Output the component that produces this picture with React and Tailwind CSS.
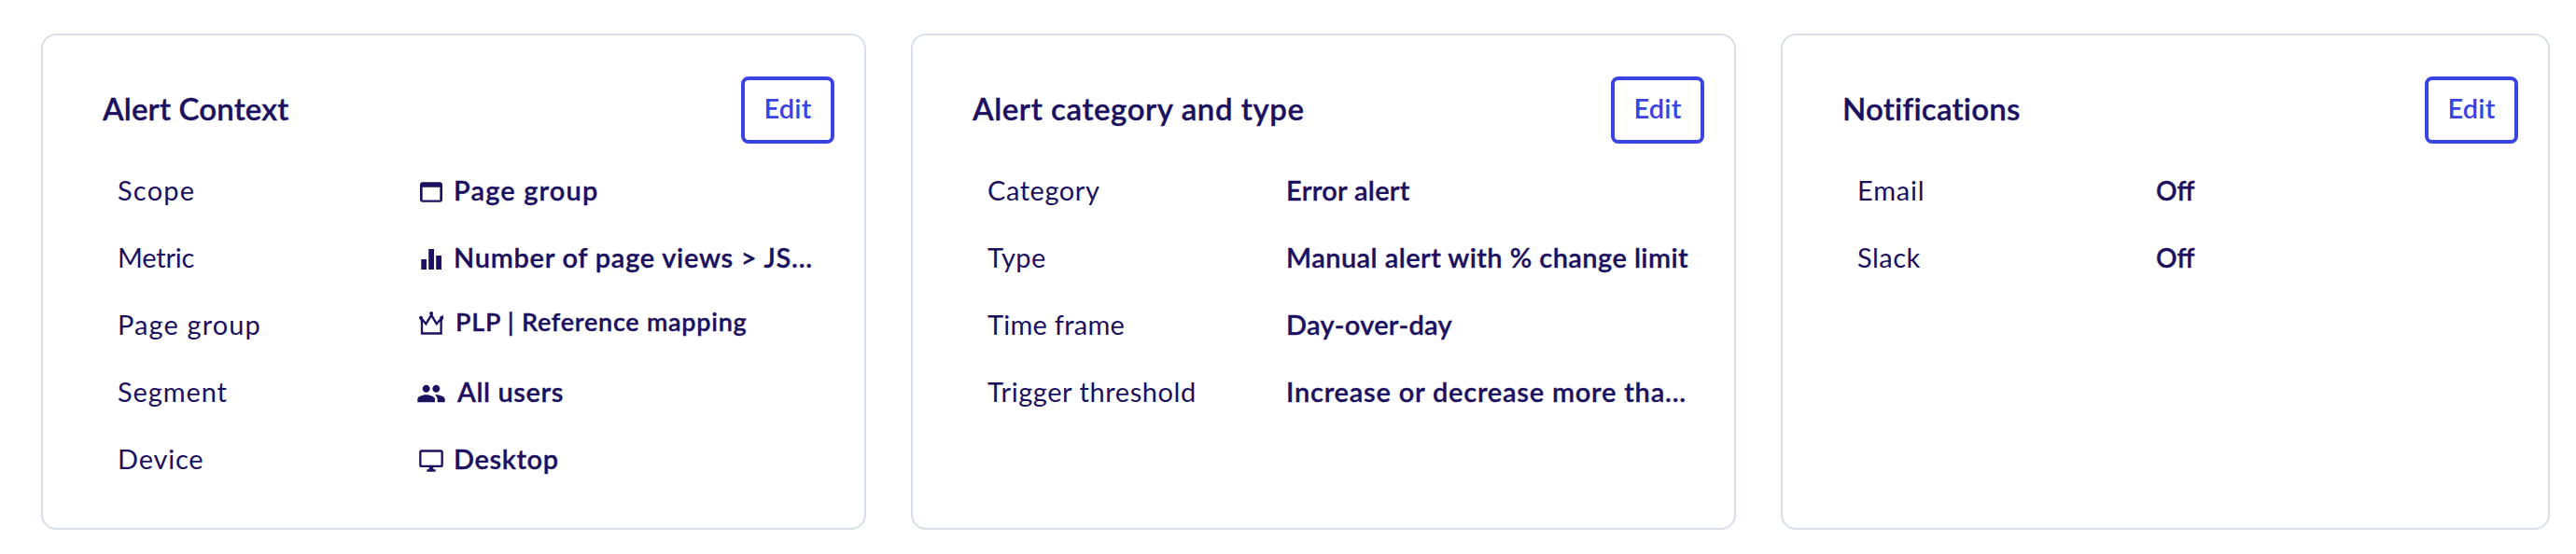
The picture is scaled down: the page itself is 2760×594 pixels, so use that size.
import React from 'react';
import { MdOutlineDesktopWindows, MdPeople } from 'react-icons/md';

const WindowIcon = () => (
  <svg viewBox="0 0 24 24" fill="currentColor" className="w-8 h-8">
    <path d="M19 4H5c-1.11 0-2 .9-2 2v12c0 1.1.89 2 2 2h14c1.1 0 2-.9 2-2V6c0-1.1-.89-2-2-2zm0 14.3H5V8h14v10.3z" />
  </svg>
);

const BarsIcon = () => (
  <svg viewBox="0 0 32 32" fill="currentColor" className="w-8 h-8">
    <path d="M5.3 16H11v11H5.3zM13.2 5H19v22h-5.8zM21.2 12H27v15h-5.8z" />
  </svg>
);

const CrownIcon = () => (
  <svg viewBox="0 0 32 32" fill="none" className="w-8 h-8">
    <path
      d="M5.2 7L6 11V23.5H26.6V11L27.2 7L21.8 13.2L16.2 3.8L10.4 13.2L5.2 7"
      stroke="currentColor"
      strokeWidth="2.3"
    />
    <g fill="currentColor">
      <circle cx="5" cy="6.8" r="2" />
      <circle cx="16.1" cy="2.1" r="2" />
      <circle cx="27.2" cy="6.8" r="2" />
    </g>
  </svg>
);

const cards = [
  {
    title: 'Alert Context',
    titleClass: 'tracking-[0.15px]',
    width: 'w-[884px]',
    rows: [
      {
        label: 'Scope',
        labelClass: 'tracking-[1.2px]',
        icon: <WindowIcon />,
        value: 'Page group',
        valueClass: 'ml-2 text-[29px] tracking-[1.15px]',
      },
      {
        label: 'Metric',
        labelClass: 'tracking-[-0.2px]',
        icon: <BarsIcon />,
        value: 'Number of page views > JS...',
        valueClass: 'ml-2 text-[29px] tracking-[0.72px]',
      },
      {
        label: 'Page group',
        labelClass: 'tracking-[1.1px]',
        icon: <CrownIcon />,
        value: 'PLP | Reference mapping',
        valueClass: 'ml-2.5 -mt-1.5 text-[27px] tracking-[0.73px]',
      },
      {
        label: 'Segment',
        labelClass: 'tracking-[0.9px]',
        icon: <MdPeople className="w-8 h-8" />,
        value: 'All users',
        valueClass: 'ml-3 text-[29px] tracking-[0.58px]',
      },
      {
        label: 'Device',
        labelClass: 'tracking-[0.78px]',
        icon: <MdOutlineDesktopWindows className="w-7 h-7" />,
        value: 'Desktop',
        valueClass: 'ml-2 text-[29px] tracking-[0.6px]',
      },
    ],
  },
  {
    title: 'Alert category and type',
    titleClass: 'tracking-[0.58px]',
    width: 'w-[884px]',
    rows: [
      {
        label: 'Category',
        labelClass: 'tracking-[0.55px]',
        value: 'Error alert',
        valueClass: 'text-[29px] tracking-[0.3px]',
      },
      {
        label: 'Type',
        labelClass: 'tracking-[0.4px]',
        value: 'Manual alert with % change limit',
        valueClass: 'text-[29px] tracking-[0.43px]',
      },
      {
        label: 'Time frame',
        labelClass: 'tracking-[0.25px]',
        value: 'Day-over-day',
        valueClass: 'text-[29px] tracking-[0.26px]',
      },
      {
        label: 'Trigger threshold',
        labelClass: 'tracking-[0.57px]',
        value: 'Increase or decrease more tha...',
        valueClass: 'text-[29px] tracking-[0.77px]',
      },
    ],
  },
  {
    title: 'Notifications',
    titleClass: 'tracking-[0.23px]',
    width: 'w-[824px]',
    rows: [
      { label: 'Email', labelClass: 'tracking-[0.8px]', value: 'Off', valueClass: 'text-[28px]' },
      { label: 'Slack', labelClass: 'tracking-[0.5px]', value: 'Off', valueClass: 'text-[28px]' },
    ],
  },
];

const Row = ({ label, labelClass, icon, value, valueClass }) => (
  <div className="flex items-center h-[72px] pl-4 text-[29px] leading-9 whitespace-nowrap">
    <span className={`w-80 shrink-0 pt-0.5 ${labelClass}`}>{label}</span>
    {icon && <span className="flex justify-center w-8 shrink-0 mt-1.5">{icon}</span>}
    <span className={`pt-0.5 leading-9 font-semibold [-webkit-text-stroke:0.35px_currentColor] ${valueClass}`}>
      {value}
    </span>
  </div>
);

const Card = ({ title, titleClass, width, rows }) => (
  <div className={`${width} h-[532px] shrink-0 border-2 border-[#d9dfe9] rounded-2xl bg-white pt-11 pl-16 pr-8`}>
    <div className="flex items-start justify-between mb-[13px]">
      <h2
        className={`mt-3.5 text-[33px] leading-10 font-semibold [-webkit-text-stroke:0.35px_currentColor] ${titleClass}`}
      >
        {title}
      </h2>
      <button
        type="button"
        className="w-[100px] h-[72px] pb-1 border-4 border-[#3a43e2] rounded-lg text-[#3a43e2] text-[29px] leading-9 font-semibold tracking-[0.2px] cursor-pointer"
      >
        Edit
      </button>
    </div>
    {rows.map((row) => (
      <Row key={row.label} {...row} />
    ))}
  </div>
);

const App = () => {
  return (
    <div className="flex gap-12 h-[594px] px-11 pt-9 bg-white text-[#1b1160] font-['Lato',sans-serif]">
      {cards.map((card) => (
        <Card key={card.title} {...card} />
      ))}
    </div>
  );
};

export default App;
